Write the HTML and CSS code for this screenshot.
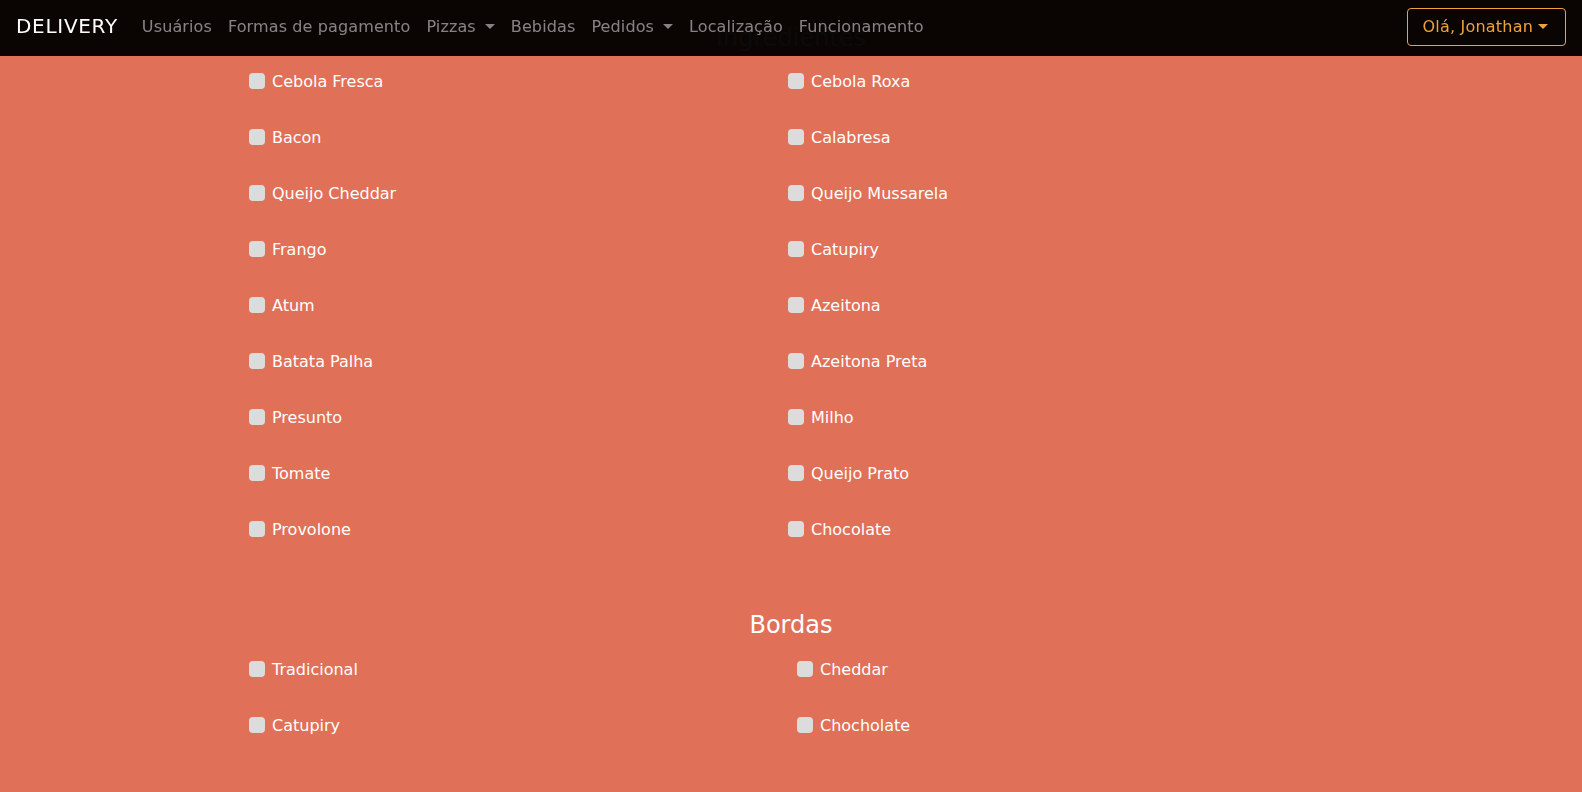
FILE: index.html
```html
<!DOCTYPE html>
<html lang="pt-BR">
<head>
<meta charset="utf-8">
<title>Delivery</title>
<link rel="stylesheet" href="styles.css">
</head>
<body>
<nav class="navbar">
  <a class="brand" href="#">DELIVERY</a>
  <ul class="nav">
    <li><a class="nav-link" href="#">Usuários</a></li>
    <li><a class="nav-link" href="#">Formas de pagamento</a></li>
    <li><a class="nav-link" href="#">Pizzas<span class="caret"></span></a></li>
    <li><a class="nav-link" href="#">Bebidas</a></li>
    <li><a class="nav-link" href="#">Pedidos<span class="caret"></span></a></li>
    <li><a class="nav-link" href="#">Localização</a></li>
    <li><a class="nav-link" href="#">Funcionamento</a></li>
  </ul>
  <button class="user-btn" type="button">Olá, Jonathan<span class="caret"></span></button>
</nav>

<main class="content">
  <h4 class="section-title">Ingredientes</h4>
  <div class="options options-ing">
    <label class="opt"><input type="checkbox"><span>Cebola Fresca</span></label>
    <label class="opt"><input type="checkbox"><span>Cebola Roxa</span></label>
    <label class="opt"><input type="checkbox"><span>Bacon</span></label>
    <label class="opt"><input type="checkbox"><span>Calabresa</span></label>
    <label class="opt"><input type="checkbox"><span>Queijo Cheddar</span></label>
    <label class="opt"><input type="checkbox"><span>Queijo Mussarela</span></label>
    <label class="opt"><input type="checkbox"><span>Frango</span></label>
    <label class="opt"><input type="checkbox"><span>Catupiry</span></label>
    <label class="opt"><input type="checkbox"><span>Atum</span></label>
    <label class="opt"><input type="checkbox"><span>Azeitona</span></label>
    <label class="opt"><input type="checkbox"><span>Batata Palha</span></label>
    <label class="opt"><input type="checkbox"><span>Azeitona Preta</span></label>
    <label class="opt"><input type="checkbox"><span>Presunto</span></label>
    <label class="opt"><input type="checkbox"><span>Milho</span></label>
    <label class="opt"><input type="checkbox"><span>Tomate</span></label>
    <label class="opt"><input type="checkbox"><span>Queijo Prato</span></label>
    <label class="opt"><input type="checkbox"><span>Provolone</span></label>
    <label class="opt"><input type="checkbox"><span>Chocolate</span></label>
  </div>

  <h4 class="section-title section-bordas">Bordas</h4>
  <div class="options options-bordas">
    <label class="opt"><input type="checkbox"><span>Tradicional</span></label>
    <label class="opt"><input type="checkbox"><span>Cheddar</span></label>
    <label class="opt"><input type="checkbox"><span>Catupiry</span></label>
    <label class="opt"><input type="checkbox"><span>Chocholate</span></label>
  </div>
</main>
</body>
</html>
```

FILE: styles.css
```css
* { box-sizing: border-box; }

html, body {
  margin: 0;
  padding: 0;
}

body {
  background: #e17059;
  color: #ffffff;
  font-family: "DejaVu Sans", "Liberation Sans", sans-serif;
  font-size: 16px;
  height: 792px;
  overflow: hidden;
}

/* ---------- navbar ---------- */
.navbar {
  position: fixed;
  top: 0;
  left: 0;
  right: 0;
  height: 56px;
  display: flex;
  align-items: center;
  padding: 0 16px 2px 16px;
  background: rgba(2, 0, 0, 0.965);
  z-index: 10;
}

.brand {
  color: #ffffff;
  font-size: 20px;
  text-decoration: none;
  margin-right: 16px;
  letter-spacing: 0.7px;
  position: relative;
  top: -1px;
}

.nav {
  list-style: none;
  display: flex;
  margin: 0;
  padding: 0;
}

.nav-link {
  display: flex;
  align-items: center;
  padding: 8px;
  color: rgba(255, 255, 255, 0.5);
  text-decoration: none;
  font-size: 16px;
  letter-spacing: 0.12px;
  position: relative;
  top: -1px;
}

.caret {
  display: inline-block;
  width: 0;
  height: 0;
  margin-left: 9px;
  border-top: 5px solid currentColor;
  border-left: 5px solid transparent;
  border-right: 5px solid transparent;
}

.user-btn {
  margin-left: auto;
  height: 38px;
  display: flex;
  align-items: center;
  padding: 0 17px 2px 15px;
  background: transparent;
  border: 1px solid #efa23a;
  border-radius: 4px;
  color: #efa23a;
  font-family: inherit;
  font-size: 16px;
  letter-spacing: 0.2px;
}

.user-btn .caret {
  margin-left: 5px;
}

/* ---------- content ---------- */
.content {
  width: 1140px;
  margin: 0 auto;
  padding-top: 24px;
}

.section-title {
  margin: 0;
  text-align: center;
  font-size: 24px;
  font-weight: normal;
  line-height: 29px;
  height: 29px;
}

.section-bordas {
  margin-top: 54px;
  margin-bottom: 1px;
}

.options {
  display: grid;
  padding-left: 28px;
  grid-auto-rows: 56px;
}

.options-ing {
  grid-template-columns: 539px 1fr;
}

.options-bordas {
  grid-template-columns: 548px 1fr;
}

.opt {
  display: flex;
  align-items: center;
  gap: 7px;
  font-size: 16px;
  color: #ffffff;
}

.opt input {
  appearance: none;
  -webkit-appearance: none;
  margin: 0;
  width: 16px;
  height: 16px;
  background: #dcdcdc;
  border: none;
  border-radius: 4px;
  flex: none;
}
```
